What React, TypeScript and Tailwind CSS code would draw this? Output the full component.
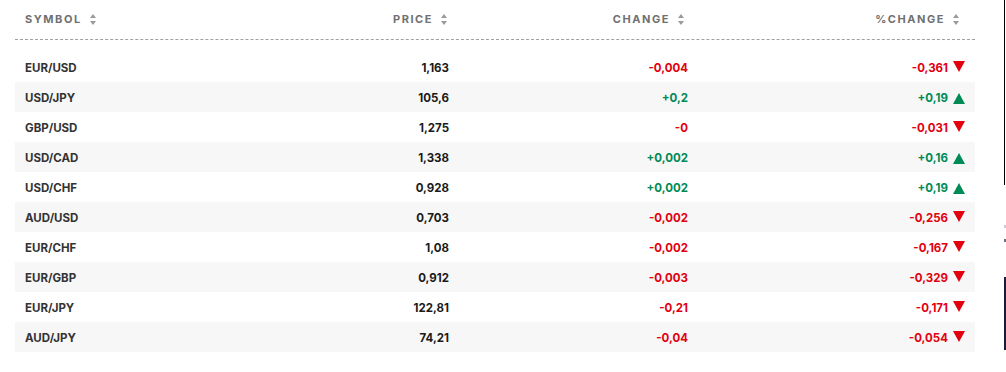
import React from 'react'

type Row = { symbol: string; price: string; change: string; pct: string; up: boolean }

const rows: Row[] = [
  { symbol: 'EUR/USD', price: '1,163', change: '-0,004', pct: '-0,361', up: false },
  { symbol: 'USD/JPY', price: '105,6', change: '+0,2', pct: '+0,19', up: true },
  { symbol: 'GBP/USD', price: '1,275', change: '-0', pct: '-0,031', up: false },
  { symbol: 'USD/CAD', price: '1,338', change: '+0,002', pct: '+0,16', up: true },
  { symbol: 'USD/CHF', price: '0,928', change: '+0,002', pct: '+0,19', up: true },
  { symbol: 'AUD/USD', price: '0,703', change: '-0,002', pct: '-0,256', up: false },
  { symbol: 'EUR/CHF', price: '1,08', change: '-0,002', pct: '-0,167', up: false },
  { symbol: 'EUR/GBP', price: '0,912', change: '-0,003', pct: '-0,329', up: false },
  { symbol: 'EUR/JPY', price: '122,81', change: '-0,21', pct: '-0,171', up: false },
  { symbol: 'AUD/JPY', price: '74,21', change: '-0,04', pct: '-0,054', up: false },
]

function SortIcon() {
  return (
    <svg width="6" height="11" viewBox="0 0 6 11" className="ml-2 shrink-0">
      <path d="M3 0 L6 4 L0 4 Z" fill="#9a9a9a" />
      <path d="M3 11 L6 7 L0 7 Z" fill="#9a9a9a" />
    </svg>
  )
}

function Arrow({ up }: { up: boolean }) {
  return up ? (
    <svg width="12" height="11" viewBox="0 0 12 11" className="ml-[5px] shrink-0">
      <path d="M6 0 L12 11 L0 11 Z" fill="#008a55" />
    </svg>
  ) : (
    <svg width="12" height="11" viewBox="0 0 12 11" className="ml-[5px] shrink-0 -mt-[4px]">
      <path d="M0 0 L12 0 L6 11 Z" fill="#e2000f" />
    </svg>
  )
}

export default function App() {
  return (
    <div className="flex h-[372px] w-[1006px] bg-white font-['Inter','Liberation_Sans',sans-serif]">
      <div className="w-[1004px] px-[15px]">
        <div className="w-[960px]">
          {/* header */}
          <div className="grid h-[40px] grid-cols-[185px_239px_239px_277px] items-center border-b border-dashed border-[#a0a0a0] px-[10px] text-[11px] font-bold tracking-[0.14em] text-[#707070]">
            <div className="flex items-center">SYMBOL<SortIcon /></div>
            <div className="flex items-center justify-end pr-[2px]">PRICE<SortIcon /></div>
            <div className="flex items-center justify-end pr-[4px]">CHANGE<SortIcon /></div>
            <div className="flex items-center justify-end pr-[6px]">%CHANGE<SortIcon /></div>
          </div>

          {/* rows */}
          <div className="mt-[12px]">
            {rows.map((r, i) => (
              <div
                key={r.symbol}
                className={`grid h-[30px] grid-cols-[185px_239px_239px_277px] items-center px-[10px] pt-[3px] text-[11.5px] font-bold ${
                  i % 2 === 1 ? 'bg-[#f7f7f7]' : 'bg-white'
                }`}
              >
                <div className="text-[#333333]">{r.symbol}</div>
                <div className="text-right text-[#1a1a1a]">{r.price}</div>
                <div className={`text-right ${r.up ? 'text-[#008a55]' : 'text-[#e2000f]'}`}>{r.change}</div>
                <div className={`flex items-center justify-end ${r.up ? 'text-[#008a55]' : 'text-[#e2000f]'}`}>
                  {r.pct}
                  <Arrow up={r.up} />
                </div>
              </div>
            ))}
          </div>
        </div>
      </div>

      {/* sliver of neighbouring content at the right edge */}
      <div className="flex w-[2px] flex-col">
        <div className="h-[185px] w-[1px] bg-black" />
        <div className="h-[40px]" />
        <div className="h-[3px] w-[2px] bg-[#c8ccd4]" />
        <div className="h-[11px]" />
        <div className="h-[3px] w-[2px] bg-[#6b7280]" />
        <div className="h-[35px]" />
        <div className="h-[73px] w-[2px] bg-[#1c1c3a]" />
      </div>
    </div>
  )
}
